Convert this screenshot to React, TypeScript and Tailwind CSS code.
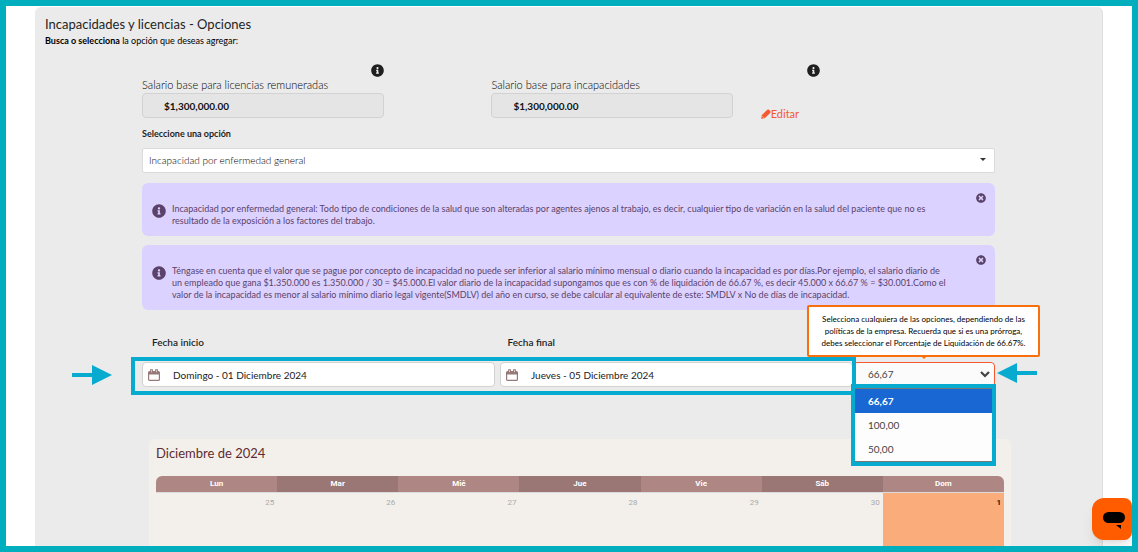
import { ReactNode, useState } from "react";
import { FaInfoCircle, FaTimesCircle } from "react-icons/fa";

const weekdays = ["Lun", "Mar", "Mié", "Jue", "Vie", "Sáb", "Dom"];
const firstWeek = [25, 26, 27, 28, 29, 30, 1];
const percentages = ["66,67", "100,00", "50,00"];

function CalendarIcon() {
  return (
    <svg
      viewBox="0 0 12 12"
      className="pointer-events-none absolute left-[6px] top-[7px] h-3 w-3"
      fill="none"
      stroke="#967a78"
      aria-hidden="true"
    >
      <rect x="0.6" y="2.6" width="10.8" height="8.8" rx="1" strokeWidth="1.2" />
      <path d="M0.6 4.2H11.4" strokeWidth="2.6" />
      <path d="M3.5 0.3V3.4M8.5 0.3V3.4" strokeWidth="2.8" />
      <path d="M3.5 1.2V3.2M8.5 1.2V3.2" stroke="#e6dcdb" strokeWidth="0.8" />
    </svg>
  );
}

function PencilIcon() {
  return (
    <svg viewBox="0 0 10 10" className="h-[10px] w-[10px]" fill="#f4592f" aria-hidden="true">
      <path d="M6 0.9Q7 0 8 0.8L9.3 2.1Q10 3 9.2 4L4 9.1L0.6 9.8Q0.2 9.8 0.2 9.4L0.9 6Z" />
      <path d="M1.6 7.4L2.7 8.5" stroke="#fff" strokeWidth="0.8" />
    </svg>
  );
}

function ArrowRight({ className }: { className: string }) {
  return (
    <svg viewBox="0 0 40 20" className={className} fill="#07abd0" aria-hidden="true">
      <path d="M0 8H20V0L40 10L20 20V12H0Z" />
    </svg>
  );
}

function SalaryField({ id, label }: { id: string; label: string }) {
  return (
    <div className="w-[242px]">
      <label htmlFor={id} className="block text-[11px] font-light leading-4 text-black">
        {label}
      </label>
      <input
        id={id}
        readOnly
        defaultValue="$1,300,000.00"
        className="block h-[25px] w-full rounded border border-[#d2d2d2] bg-[#e5e5e5] pl-[21px] text-[10px] font-bold text-[#111]"
      />
    </div>
  );
}

function Notice({ children }: { children: ReactNode }) {
  const [open, setOpen] = useState(true);
  if (!open) return null;
  return (
    <div className="relative flex gap-[6px] rounded-md bg-[#dbd2ff] pb-[9px] pl-[10px] pr-[16px] pt-5 text-[#5b426b]">
      <FaInfoCircle className="mt-[1px] h-[14px] w-[14px] shrink-0" />
      <p className="text-[9px] leading-[12px]">{children}</p>
      <button
        type="button"
        aria-label="Cerrar"
        onClick={() => setOpen(false)}
        className="absolute right-[9px] top-[10px]"
      >
        <FaTimesCircle className="h-[10px] w-[10px]" />
      </button>
    </div>
  );
}

function DateField({ id, value }: { id: string; value: string }) {
  return (
    <div className="relative min-w-0 flex-1">
      <CalendarIcon />
      <input
        id={id}
        defaultValue={value}
        className="block h-[25px] w-full rounded border border-[#d2d2d2] bg-white pl-[30px] text-[10px] text-[#222]"
      />
    </div>
  );
}

function PercentSelect() {
  const [value, setValue] = useState("66,67");
  return (
    <div className="relative w-[142px]">
      <select
        aria-label="Porcentaje de Liquidación"
        value={value}
        onChange={(e) => setValue(e.target.value)}
        className="block h-[25px] w-full appearance-none rounded border border-[#f4592f] bg-[#fbfbfb] pl-[14px] text-[10px] text-[#444]"
      >
        {percentages.map((p) => (
          <option key={p}>{p}</option>
        ))}
      </select>
      <svg
        viewBox="0 0 10 7"
        className="pointer-events-none absolute right-[5px] top-[9px] h-[7px] w-[10px]"
        fill="none"
        stroke="#444"
        strokeWidth="2.2"
        aria-hidden="true"
      >
        <path d="M1 1L5 5L9 1" />
      </svg>

      {/* Open list */}
      <ul
        role="listbox"
        className="absolute -left-[2px] top-[22px] z-20 w-[145px] border-4 border-[#07abd0] bg-[#fdfdfd] text-[10px] text-[#444]"
      >
        {percentages.map((p) => (
          <li
            key={p}
            role="option"
            aria-selected={p === value}
            onClick={() => setValue(p)}
            className={
              p === value
                ? "border-t border-[#777] bg-[#1967d2] pl-[13px] font-bold leading-6 text-white"
                : "border-[#777] pl-[13px] leading-6 last:border-b"
            }
          >
            {p}
          </li>
        ))}
      </ul>

      {/* Tooltip */}
      <div
        role="tooltip"
        className="absolute -right-[45px] bottom-[30px] z-20 w-[233px] rounded-xs border-2 border-[#f86f0c] bg-white px-2 py-[6px] text-center text-[8px] leading-[12px] text-black"
      >
        Selecciona cualquiera de las opciones, dependiendo de las políticas de la
        empresa. Recuerda que si es una prórroga, debes seleccionar el Porcentaje
        de Liquidación de 66.67%.
        <span className="absolute left-1/2 top-full -translate-x-1/2 border-x-4 border-t-4 border-x-transparent border-t-[#f86f0c]" />
      </div>
      <ArrowRight className="absolute -right-[42px] top-[1px] h-5 w-10 rotate-180" />
    </div>
  );
}

function MonthCalendar() {
  return (
    <section className="-mr-[16px] ml-[7px] mt-[52px] flex-1 rounded-t-md bg-[#f3f0eb] px-[7px] pt-[5px]">
      <h2 className="text-[13px] leading-[18px] text-[#5f2b30]">
        Diciembre de 2024
      </h2>
      <table className="mt-[14px] w-full table-fixed border-collapse font-['Roboto',sans-serif] text-[8px]">
        <thead>
          <tr>
            {weekdays.map((day) => (
              <th
                key={day}
                className="h-4 bg-[#ae8784] p-0 font-bold leading-[14px] text-white first:rounded-tl-md last:rounded-tr-md even:bg-[#9a7775]"
              >
                {day}
              </th>
            ))}
          </tr>
        </thead>
        <tbody>
          <tr className="border-t border-[#dcdcdc]">
            {firstWeek.map((day) => (
              <td
                key={day}
                className="h-24 px-[3px] pt-[4px] text-right align-top leading-[12px] text-[#aaa] last:bg-[#faad7a] last:font-bold last:text-[#222]"
              >
                {day}
              </td>
            ))}
          </tr>
        </tbody>
      </table>
    </section>
  );
}

export default function App() {
  return (
    <div className="relative h-screen overflow-hidden border-6 border-[#00aebd] bg-white font-['Lato',sans-serif] text-[#1f1f1f]">
      <main className="mx-[29px] mt-px flex min-h-full flex-col rounded-md border-r border-[#dedede] bg-[#ebebeb] pt-2">
        <header className="pl-[10px]">
          <h1 className="text-[13px] leading-[18px]">
            Incapacidades y licencias - Opciones
          </h1>
          <p className="text-[9px] leading-4 text-black">
            <strong>Busca o selecciona</strong> la opción que deseas agregar:
          </p>
        </header>

        <div className="flex flex-1 flex-col px-[107px]">
          <div className="mt-[15px] grid grid-cols-[349fr_269fr_234fr]">
            <div>
              <FaInfoCircle className="ml-[229px] h-[13px] w-[13px]" />
              <SalaryField id="licencias" label="Salario base para licencias remuneradas" />
            </div>
            <div className="pt-[13px]">
              <SalaryField id="incapacidades" label="Salario base para incapacidades" />
            </div>
            <div>
              <FaInfoCircle className="ml-[46px] h-[13px] w-[13px]" />
              <a
                href="#editar"
                className="mt-[29px] flex items-center text-[11px] leading-4 text-[#f4592f]"
              >
                <PencilIcon />
                Editar
              </a>
            </div>
          </div>

          <label htmlFor="opcion" className="mt-1 text-[9px] font-bold leading-4">
            Seleccione una opción
          </label>
          <div className="relative mt-[6px]">
            <select
              id="opcion"
              className="block h-[25px] w-full appearance-none rounded-xs border border-[#dadada] bg-white pl-[6px] text-[10px] font-light text-black"
            >
              <option>Incapacidad por enfermedad general</option>
            </select>
            <span className="pointer-events-none absolute right-[9px] top-[10px] border-x-3 border-t-3 border-x-transparent border-t-[#333]" />
          </div>

          <div className="mt-[10px] flex flex-col gap-[9px]">
            <Notice>
              Incapacidad por enfermedad general: Todo tipo de condiciones de la
              salud que son alteradas por agentes ajenos al trabajo, es decir,
              cualquier tipo de variación en la salud del paciente que no es
              <br />
              resultado de la exposición a los factores del trabajo.
            </Notice>
            <Notice>
              Téngase en cuenta que el valor que se pague por concepto de
              incapacidad no puede ser inferior al salario mínimo mensual o
              diario cuando la incapacidad es por días.Por ejemplo, el salario
              diario de
              <br />
              un empleado que gana $1.350.000 es 1.350.000 / 30 = $45.000.El
              valor diario de la incapacidad supongamos que es con % de
              liquidación de 66.67 %, es decir 45.000 x 66.67 % = $30.001.Como el
              <br />
              valor de la incapacidad es menor al salario mínimo diario legal
              vigente(SMDLV) del año en curso, se debe calcular al equivalente de
              este: SMDLV x No de días de incapacidad.
            </Notice>
          </div>

          <div className="mt-6 flex pr-[142px] text-[10px] font-semibold leading-4">
            <label htmlFor="inicio" className="flex-1 pl-[10px]">
              Fecha inicio
            </label>
            <label htmlFor="final" className="flex-1 pl-[10px]">
              Fecha final
            </label>
          </div>
          <div className="relative mt-3 flex">
            <div className="flex flex-1 gap-[5px]">
              <DateField id="inicio" value="Domingo - 01 Diciembre 2024" />
              <DateField id="final" value="Jueves - 05 Diciembre 2024" />
            </div>
            <PercentSelect />
            <ArrowRight className="absolute -left-[70px] top-[3px] h-5 w-10" />
            <div className="pointer-events-none absolute -bottom-[8px] -left-[11px] -top-[5px] right-[139px] z-10 border-4 border-[#07abd0]" />
          </div>

          <MonthCalendar />
        </div>
      </main>

      <button
        type="button"
        aria-label="Chat"
        className="absolute bottom-[6px] right-0 flex h-[42px] w-10 items-center justify-center rounded-l-xl rounded-r-lg bg-[#ff5c00] pl-1 pt-1 shadow-lg"
      >
        <svg viewBox="0 0 22 18" className="h-[18px] w-[22px]" aria-hidden="true">
          <rect x="0" y="0" width="22" height="11" rx="5.5" />
          <path d="M13 13H18V17Z" />
        </svg>
      </button>
    </div>
  );
}
